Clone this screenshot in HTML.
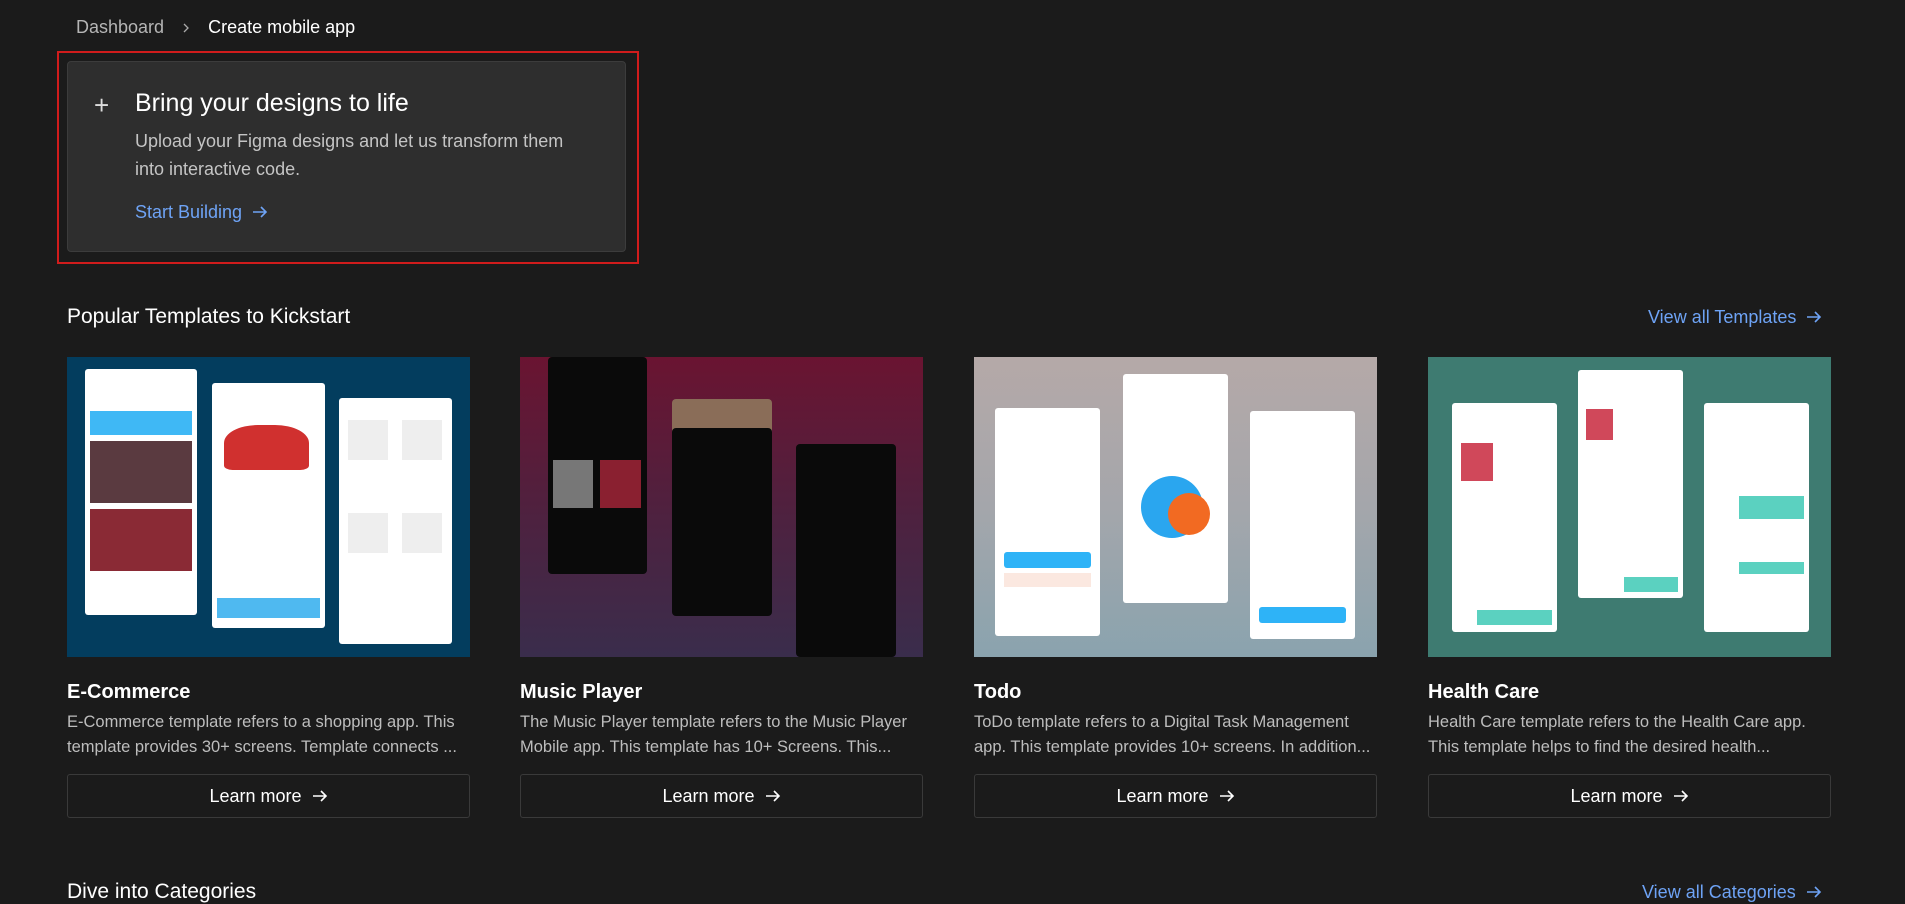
<!DOCTYPE html>
<html><head><meta charset="utf-8"><style>
*{margin:0;padding:0;box-sizing:border-box}
body{width:1905px;height:895px;overflow:hidden;background:#1b1b1b;font-family:"Liberation Sans",sans-serif;color:#fff;position:relative}
.abs{position:absolute}
.crumb{left:76px;top:17px;font-size:18px;color:#b5b5b5}
.crumb b{font-weight:normal;color:#fff}
.red{left:57px;top:51px;width:582px;height:213px;border:2px solid #d01c1c}
.card{left:67px;top:61px;width:559px;height:191px;background:#2e2e2e;border:1px solid #3c3c3c;border-radius:4px}
.h2{font-size:21px;color:#fff}
.link{color:#6ea3f5}
.img{top:357px;width:403px;height:300px;overflow:hidden}
.ph{position:absolute;background:#fff;border-radius:3px}
.blk{position:absolute;background:#0a0a0a;border-radius:4px}
.t{font-size:20px;font-weight:bold;top:681px}
.d{font-size:16.5px;line-height:25px;color:#bdbdbd;top:710px;width:410px}
.btn{top:774px;width:403px;height:44px;border:1px solid #3a3a3a;border-radius:3px;text-align:center;line-height:42px;font-size:18px;color:#fff}
svg.ar{display:inline-block;vertical-align:middle;margin-left:10px;margin-top:-3px}
</style></head><body>
<div class="abs crumb">Dashboard <svg width="18" height="12" viewBox="0 0 18 12" style="margin:0 8px;vertical-align:middle"><path d="M7 2l4 4-4 4" stroke="#aaa" stroke-width="1.3" fill="none"/></svg> <b>Create mobile app</b></div>
<div class="abs red"></div>
<div class="abs card"></div>
<div class="abs" style="left:94px;top:90px;font-size:26px;color:#ddd;font-weight:300">+</div>
<div class="abs" style="left:135px;top:89px;font-size:25px;color:#fff">Bring your designs to life</div>
<div class="abs" style="left:135px;top:127px;font-size:18px;line-height:28px;color:#c4c4c4">Upload your Figma designs and let us transform them<br>into interactive code.</div>
<div class="abs link" style="left:135px;top:202px;font-size:18px">Start Building<svg class="ar" width="16" height="14" viewBox="0 0 16 14"><path d="M1 7h13M9 2l5 5-5 5" stroke="#6ea3f5" stroke-width="1.6" fill="none"/></svg></div>

<div class="abs h2" style="left:67px;top:305px">Popular Templates to Kickstart</div>
<div class="abs link" style="left:1648px;top:307px;font-size:18px">View all Templates<svg class="ar" width="16" height="14" viewBox="0 0 16 14"><path d="M1 7h13M9 2l5 5-5 5" stroke="#6ea3f5" stroke-width="1.6" fill="none"/></svg></div>

<div class="abs img" style="left:67px;background:#033d5e">
 <div class="ph" style="left:18px;top:12px;width:112px;height:246px">
  <div class="abs" style="left:5px;top:42px;width:102px;height:24px;background:#3fb8f5"></div>
  <div class="abs" style="left:5px;top:72px;width:102px;height:62px;background:#5a3a40"></div>
  <div class="abs" style="left:5px;top:140px;width:102px;height:62px;background:#8a2a35"></div>
 </div>
 <div class="ph" style="left:145px;top:26px;width:113px;height:245px">
  <div class="abs" style="left:12px;top:42px;width:85px;height:45px;background:#d0302f;border-radius:40% 40% 10% 10%"></div>
  <div class="abs" style="left:5px;top:215px;width:103px;height:20px;background:#4fb9f0"></div>
 </div>
 <div class="ph" style="left:272px;top:41px;width:113px;height:246px">
  <div class="abs" style="left:9px;top:22px;width:40px;height:40px;background:#eee"></div>
  <div class="abs" style="left:63px;top:22px;width:40px;height:40px;background:#eee"></div>
  <div class="abs" style="left:9px;top:115px;width:40px;height:40px;background:#eee"></div>
  <div class="abs" style="left:63px;top:115px;width:40px;height:40px;background:#eee"></div>
 </div>
</div>

<div class="abs img" style="left:520px;background:linear-gradient(180deg,#6a1431 0%,#4d2240 55%,#3a2d4c 100%)">
 <div class="blk" style="left:28px;top:0;width:99px;height:217px">
  <div class="abs" style="left:5px;top:103px;width:40px;height:48px;background:#777"></div>
  <div class="abs" style="left:52px;top:103px;width:41px;height:48px;background:#8a2030"></div>
 </div>
 <div class="abs" style="left:152px;top:42px;width:100px;height:40px;background:#8a6d58;border-radius:4px"></div>
 <div class="blk" style="left:152px;top:71px;width:100px;height:188px"></div>
 <div class="blk" style="left:276px;top:87px;width:100px;height:213px"></div>
</div>

<div class="abs img" style="left:974px;background:linear-gradient(180deg,#b5a9a8 0%,#a4a6ab 50%,#8aa3ae 100%)">
 <div class="ph" style="left:21px;top:51px;width:105px;height:228px">
  <div class="abs" style="left:9px;top:144px;width:87px;height:16px;background:#2eb3f7;border-radius:3px"></div>
  <div class="abs" style="left:9px;top:165px;width:87px;height:14px;background:#fbe8e0"></div>
 </div>
 <div class="ph" style="left:149px;top:17px;width:105px;height:229px"></div>
 <div class="abs" style="left:167px;top:119px;width:62px;height:62px;border-radius:50%;background:#2aa6ef"></div>
 <div class="abs" style="left:194px;top:136px;width:42px;height:42px;border-radius:50%;background:#f26a22"></div>
 <div class="ph" style="left:276px;top:54px;width:105px;height:228px">
  <div class="abs" style="left:9px;top:196px;width:87px;height:16px;background:#2eb3f7;border-radius:3px"></div>
 </div>
</div>

<div class="abs img" style="left:1428px;background:#3e7b71">
 <div class="ph" style="left:24px;top:46px;width:105px;height:229px">
  <div class="abs" style="left:9px;top:40px;width:32px;height:38px;background:#d0485a"></div>
  <div class="abs" style="left:25px;top:207px;width:75px;height:15px;background:#5bd1c0"></div>
 </div>
 <div class="ph" style="left:150px;top:13px;width:105px;height:228px">
  <div class="abs" style="left:8px;top:39px;width:27px;height:31px;background:#d0485a"></div>
  <div class="abs" style="left:46px;top:207px;width:54px;height:15px;background:#5bd1c0"></div>
 </div>
 <div class="ph" style="left:276px;top:46px;width:105px;height:229px">
  <div class="abs" style="left:35px;top:93px;width:65px;height:23px;background:#5bd1c0"></div>
  <div class="abs" style="left:35px;top:159px;width:65px;height:12px;background:#5bd1c0"></div>
 </div>
</div>

<div class="abs t" style="left:67px">E-Commerce</div>
<div class="abs t" style="left:520px">Music Player</div>
<div class="abs t" style="left:974px">Todo</div>
<div class="abs t" style="left:1428px">Health Care</div>
<div class="abs d" style="left:67px">E-Commerce template refers to a shopping app. This<br>template provides 30+ screens. Template connects ...</div>
<div class="abs d" style="left:520px">The Music Player template refers to the Music Player<br>Mobile app. This template has 10+ Screens. This...</div>
<div class="abs d" style="left:974px">ToDo template refers to a Digital Task Management<br>app. This template provides 10+ screens. In addition...</div>
<div class="abs d" style="left:1428px">Health Care template refers to the Health Care app.<br>This template helps to find the desired health...</div>
<div class="abs btn" style="left:67px">Learn more<svg class="ar" width="16" height="14" viewBox="0 0 16 14"><path d="M1 7h13M9 2l5 5-5 5" stroke="#fff" stroke-width="1.6" fill="none"/></svg></div>
<div class="abs btn" style="left:520px">Learn more<svg class="ar" width="16" height="14" viewBox="0 0 16 14"><path d="M1 7h13M9 2l5 5-5 5" stroke="#fff" stroke-width="1.6" fill="none"/></svg></div>
<div class="abs btn" style="left:974px">Learn more<svg class="ar" width="16" height="14" viewBox="0 0 16 14"><path d="M1 7h13M9 2l5 5-5 5" stroke="#fff" stroke-width="1.6" fill="none"/></svg></div>
<div class="abs btn" style="left:1428px">Learn more<svg class="ar" width="16" height="14" viewBox="0 0 16 14"><path d="M1 7h13M9 2l5 5-5 5" stroke="#fff" stroke-width="1.6" fill="none"/></svg></div>

<div class="abs h2" style="left:67px;top:880px">Dive into Categories</div>
<div class="abs link" style="left:1642px;top:882px;font-size:18px">View all Categories<svg class="ar" width="16" height="14" viewBox="0 0 16 14"><path d="M1 7h13M9 2l5 5-5 5" stroke="#6ea3f5" stroke-width="1.6" fill="none"/></svg></div>
</body></html>
